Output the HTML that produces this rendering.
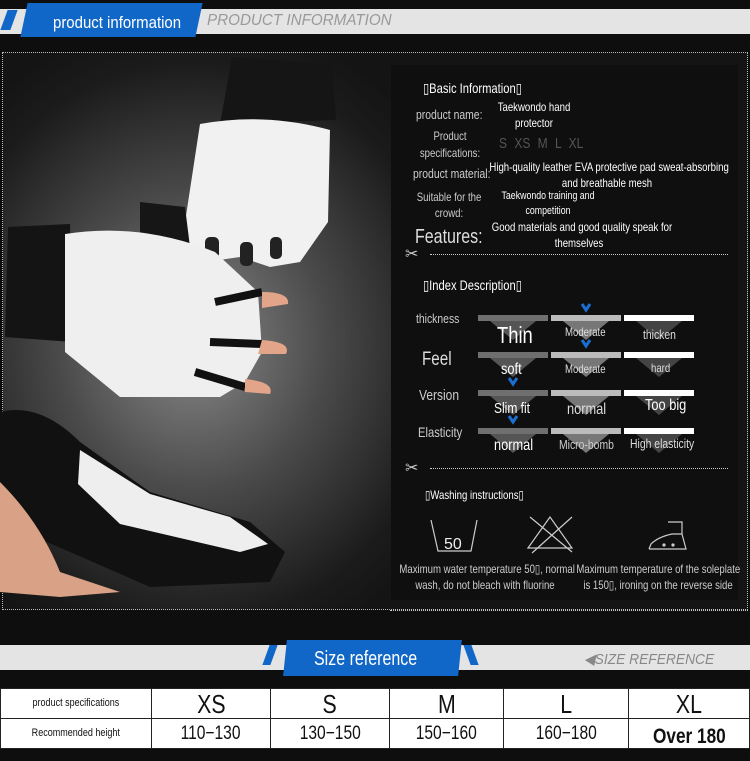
<!DOCTYPE html>
<html><head><meta charset="utf-8"><style>
*{margin:0;padding:0;box-sizing:border-box}
body{width:750px;height:761px;background:#0e0e0e;position:relative;overflow:hidden;font-family:"Liberation Sans",sans-serif;color:#eee}
.abs{position:absolute}
.bar{background:#e4e4e4}
.t{position:absolute;white-space:nowrap;text-align:center;transform:scaleX(.8);transform-origin:left top}
.c{transform-origin:center top}
.dash{position:absolute;border-top:1px dotted #ccc;height:0}
table{border-collapse:collapse}
td{border:1px solid #222;text-align:center;color:#111;background:#fff;padding:0;line-height:1}
td span{display:inline-block;transform:scaleX(.82)}
</style></head><body>
<!-- top header -->
<div class="abs bar" style="left:0;top:9px;width:750px;height:25px"></div>
<div class="abs" style="left:24px;top:3px;width:175px;height:34px;background:#1167c8;transform:skewX(-12deg)"></div>
<div class="abs" style="left:4px;top:10px;width:10px;height:20px;background:#1167c8;transform:skewX(-20deg)"></div>
<div class="t" style="left:53px;top:13px;font-size:17px;color:#fff;transform:scaleX(.88)">product information</div>
<div class="t" style="left:207px;top:12px;font-size:16px;color:#999;font-style:italic;transform:scaleX(.95)">PRODUCT INFORMATION</div>
<!-- main panel -->
<div class="abs" style="left:2px;top:52px;width:746px;height:558px;border:1px dotted #bbb;background:radial-gradient(ellipse 300px 330px at 190px 290px,#8a8a8a 0%,#4a4a4a 45%,#1b1b1b 85%,#141414 100%)"></div>
<svg class="abs" style="left:0;top:52px" width="390" height="558">
 <path d="M232 5 L332 12 L336 68 L220 72Z" fill="#151515"/>
 <path d="M200 72 Q265 60 330 78 L328 170 L300 210 L270 215 L240 205 L205 210 L182 190 Z" fill="#f1f1f1"/>
 <rect x="205" y="185" width="14" height="22" rx="5" fill="#222"/><rect x="240" y="190" width="13" height="24" rx="5" fill="#222"/><rect x="270" y="185" width="12" height="22" rx="5" fill="#222"/>
 <path d="M140 150 L185 155 L190 195 L140 190Z" fill="#161616"/>
 <path d="M8 175 L70 172 L72 290 L5 285Z" fill="#141414"/>
 <path d="M65 182 Q140 170 215 200 L258 240 L262 300 L245 330 L220 345 L120 345 L65 300Z" fill="#efefef"/>
 <path d="M215 250 L262 240 M210 290 L262 292 M195 320 L245 335" stroke="#111" stroke-width="8"/>
 <path d="M262 240 Q290 240 288 252 L262 256Z M262 288 Q292 290 286 302 L258 302Z M245 327 Q275 330 270 342 L245 340Z" fill="#e3a58a"/>
 <path d="M0 360 Q40 350 80 390 L150 440 L250 470 L285 500 L270 530 L150 535 L70 500 L0 470Z" fill="#111"/>
 <path d="M80 398 L150 442 L230 465 L268 492 L240 500 L120 472 L78 432Z" fill="#eee"/>
 <path d="M0 430 Q40 470 60 520 L120 540 L60 545 L0 540Z" fill="#d9a185"/>
</svg>
<div class="abs" style="left:391px;top:65px;width:347px;height:535px;background:#0f0f0f"></div>
<!-- basic info -->
<div class="t" style="left:423px;top:80px;font-size:14px;color:#fff">▯Basic Information▯</div>
<div class="t" style="left:416px;top:107px;font-size:13px;color:#ccc">product name:</div>
<div class="t c" style="left:480px;top:99px;font-size:12px;line-height:16px;color:#fff;width:108px">Taekwondo hand<br>protector</div>
<div class="t c" style="left:405px;top:128px;font-size:12px;line-height:17px;color:#ccc;width:90px">Product<br>specifications:</div>
<div class="t" style="left:499px;top:135px;font-size:15px;color:#555;word-spacing:5px">S XS M L XL</div>
<div class="t" style="left:413px;top:166px;font-size:13px;color:#ccc">product material:</div>
<div class="t c" style="left:460px;top:159px;font-size:12px;line-height:16px;color:#fff;width:294px">High-quality leather EVA protective pad sweat-absorbing<br>and breathable mesh</div>
<div class="t c" style="left:404px;top:189px;font-size:12px;line-height:16px;color:#ccc;width:90px">Suitable for the<br>crowd:</div>
<div class="t c" style="left:486px;top:189px;font-size:11px;line-height:15px;color:#fff;width:124px">Taekwondo training and<br>competition</div>
<div class="t" style="left:415px;top:226px;font-size:20px;color:#ddd">Features:</div>
<div class="t c" style="left:470px;top:219px;font-size:12px;line-height:16px;color:#fff;width:218px">Good materials and good quality speak for<br>themselves</div>
<div class="abs" style="left:405px;top:244px;font-size:16px;color:#ccc">✂</div>
<div class="dash" style="left:430px;top:254px;width:298px"></div>
<!-- index -->
<div class="t" style="left:423px;top:277px;font-size:14px;color:#fff">▯Index Description▯</div>
<svg class="abs" style="left:478px;top:300px" width="220" height="160">
 <g id="row">
  <rect x="0" y="15" width="70" height="6" fill="#6f6f6f"/><rect x="73" y="15" width="70" height="6" fill="#bbb"/><rect x="146" y="15" width="70" height="6" fill="#fff"/>
  <path d="M12 21 L58 21 L35 40Z" fill="#555"/><path d="M85 21 L131 21 L108 40Z" fill="#777"/><path d="M158 21 L204 21 L181 40Z" fill="#444"/>
 </g>
 <use href="#row" y="37"/><use href="#row" y="75"/><use href="#row" y="113"/>
 <path d="M104 4 L108 10 L112 4" stroke="#1a6fd0" stroke-width="3" fill="none"/>
 <path d="M104 40 L108 46 L112 40" stroke="#1a6fd0" stroke-width="3" fill="none"/>
 <path d="M31 78 L35 84 L39 78" stroke="#1a6fd0" stroke-width="3" fill="none"/>
 <path d="M31 116 L35 122 L39 116" stroke="#1a6fd0" stroke-width="3" fill="none"/>
</svg>
<div class="t" style="left:416px;top:311px;font-size:13px;color:#ccc">thickness</div>
<div class="t" style="left:497px;top:322px;font-size:23px;color:#fff">Thin</div>
<div class="t" style="left:565px;top:325px;font-size:12px;color:#ddd">Moderate</div>
<div class="t" style="left:643px;top:327px;font-size:13px;color:#ddd">thicken</div>
<div class="t" style="left:422px;top:349px;font-size:19px;color:#ddd">Feel</div>
<div class="t" style="left:501px;top:361px;font-size:16px;color:#fff">soft</div>
<div class="t" style="left:565px;top:362px;font-size:12px;color:#ddd">Moderate</div>
<div class="t" style="left:651px;top:361px;font-size:12px;color:#ddd">hard</div>
<div class="t" style="left:419px;top:387px;font-size:15px;color:#ccc">Version</div>
<div class="t" style="left:494px;top:400px;font-size:15px;color:#fff">Slim fit</div>
<div class="t" style="left:567px;top:401px;font-size:16px;color:#ddd">normal</div>
<div class="t" style="left:645px;top:397px;font-size:16px;color:#fff">Too big</div>
<div class="t" style="left:418px;top:424px;font-size:14px;color:#ccc">Elasticity</div>
<div class="t" style="left:494px;top:437px;font-size:16px;color:#fff">normal</div>
<div class="t" style="left:559px;top:437px;font-size:13px;color:#ccc">Micro-bomb</div>
<div class="t" style="left:630px;top:436px;font-size:13px;color:#ddd">High elasticity</div>
<div class="abs" style="left:405px;top:458px;font-size:16px;color:#ccc">✂</div>
<div class="dash" style="left:430px;top:468px;width:298px"></div>
<!-- washing -->
<div class="t" style="left:425px;top:488px;font-size:12px;color:#fff">▯Washing instructions▯</div>
<svg class="abs" style="left:420px;top:515px" width="290" height="50" fill="none" stroke="#ccc" stroke-width="1.2">
 <path d="M11 5 L18 36 L51 36 L57 5"/><text x="24" y="34" fill="#eee" stroke="none" font-size="16" font-family="Liberation Sans">50</text>
 <path d="M108 33 L130 2 L152 33Z M110 2 L152 37 M152 2 L112 38"/>
 <path d="M229 34 L231 29 Q238 22 252 19 L262 19 L262 7 L248 7 M229 34 L266 34 L262 19"/>
 <circle cx="244" cy="30" r="1" fill="#ccc"/><circle cx="253" cy="30" r="1" fill="#ccc"/>
</svg>
<div class="t c" style="left:378px;top:561px;font-size:12px;line-height:16px;color:#ccc;width:214px">Maximum water temperature 50▯, normal<br>wash, do not bleach with fluorine</div>
<div class="t c" style="left:556px;top:561px;font-size:12px;line-height:16px;color:#ccc;width:204px">Maximum temperature of the soleplate<br>is 150▯, ironing on the reverse side</div>
<div class="dash" style="left:390px;top:610px;width:358px"></div>
<!-- size header -->
<div class="abs bar" style="left:0;top:645px;width:750px;height:25px"></div>
<div class="abs" style="left:285px;top:640px;width:175px;height:36px;background:#1167c8;transform:skewX(-6deg)"></div>
<div class="abs" style="left:266px;top:645px;width:8px;height:20px;background:#1167c8;transform:skewX(-20deg)"></div>
<div class="abs" style="left:467px;top:645px;width:8px;height:20px;background:#1167c8;transform:skewX(20deg)"></div>
<div class="t" style="left:314px;top:648px;font-size:20px;color:#fff">Size reference</div>
<div class="t" style="left:584px;top:650px;font-size:15px;color:#888;font-style:italic;transform:scaleX(.92)">◀SIZE REFERENCE</div>
<!-- table -->
<table class="abs" style="left:0;top:688px;width:750px;height:60px">
<tr style="height:30px"><td style="width:151px;font-size:11px"><span>product specifications</span></td><td style="width:119px;font-size:26px"><span>XS</span></td><td style="width:119px;font-size:26px"><span>S</span></td><td style="width:114px;font-size:26px"><span>M</span></td><td style="width:125px;font-size:26px"><span>L</span></td><td style="font-size:26px"><span>XL</span></td></tr>
<tr style="height:30px"><td style="font-size:11px"><span>Recommended height</span></td><td style="font-size:19px"><span>110−130</span></td><td style="font-size:19px"><span>130−150</span></td><td style="font-size:19px"><span>150−160</span></td><td style="font-size:19px"><span>160−180</span></td><td style="font-size:21px;font-weight:bold;padding-top:5px"><span>Over 180</span></td></tr>
</table>
</body></html>
